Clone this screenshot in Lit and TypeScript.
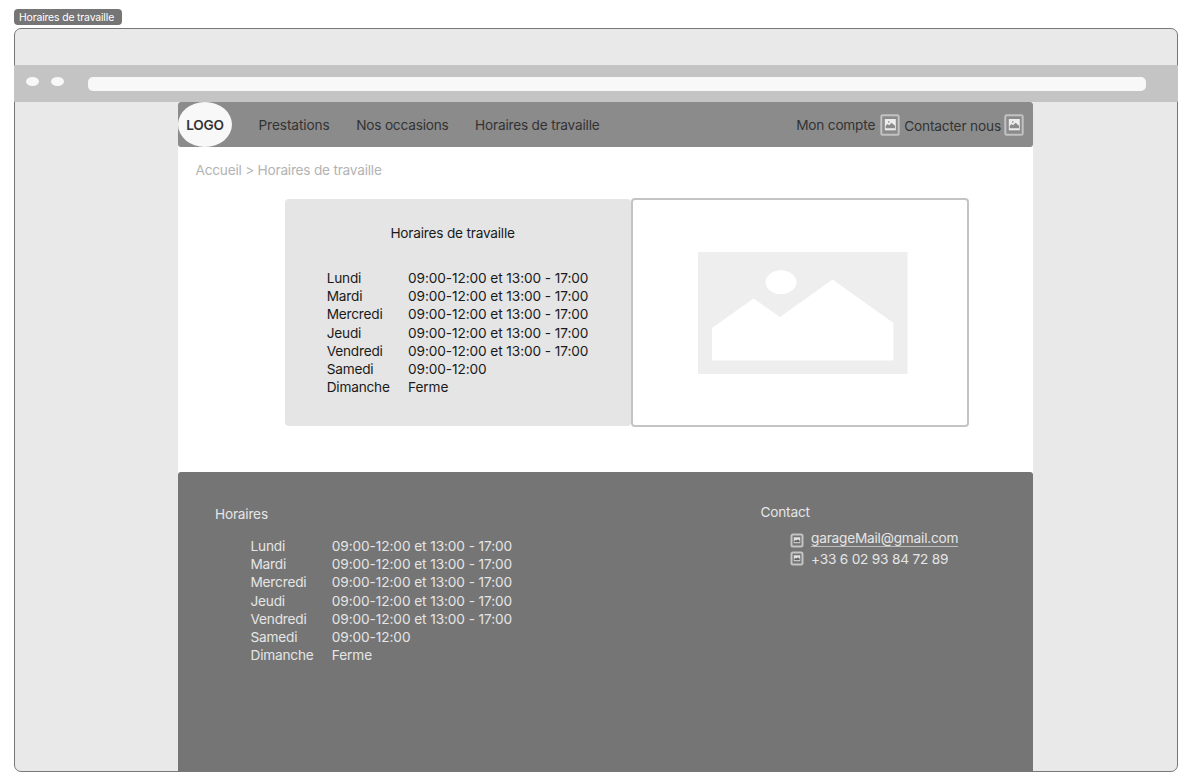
import { LitElement, html, css, svg } from "lit";
import { customElement, property } from "lit/decorators.js";

const HOURS: [string, string][] = [
  ["Lundi", "09:00-12:00 et 13:00 - 17:00"],
  ["Mardi", "09:00-12:00 et 13:00 - 17:00"],
  ["Mercredi", "09:00-12:00 et 13:00 - 17:00"],
  ["Jeudi", "09:00-12:00 et 13:00 - 17:00"],
  ["Vendredi", "09:00-12:00 et 13:00 - 17:00"],
  ["Samedi", "09:00-12:00"],
  ["Dimanche", "Ferme"],
];

// Landscape placeholder: a frame with two peaks and a sun cut out of it.
const landscape = svg`<path fill-rule="evenodd" d="M0 0H209.500V122H0ZM14 76V108.500H195.500V71L134.500 27.500L82 65L55.500 46.500ZM83 18A17 12.200 0 0 0 83 42.300A17 12.200 0 0 0 83 18Z"/>`;

@customElement("hours-table")
class HoursTable extends LitElement {
  static styles = css`
    :host { display: block; }
    .grid {
      display: grid;
      grid-template-columns: 81.300px max-content;
      grid-auto-rows: 18.200px;
      line-height: 18.200px;
      white-space: nowrap;
    }
    .time { letter-spacing: -.08px; }
  `;
  render() {
    return html`<div class="grid">
      ${HOURS.map(([day, time]) => html`<span>${day}</span><span class="time">${time}</span>`)}
    </div>`;
  }
}

@customElement("picture-icon")
class PictureIcon extends LitElement {
  @property({ type: Boolean, reflect: true }) small = false;
  static styles = css`
    :host { display: block; flex: none; width: 20px; height: 22px; }
    :host([small]) { width: 14px; height: 15px; }
    svg { display: block; width: 100%; height: 100%; }
  `;
  render() {
    return this.small
      ? html`<svg viewBox="0 0 14 15">
          <rect x="1.500" y="1.500" width="11" height="12" rx="1.500" fill="#757575" stroke="#c4c4c4" stroke-width="2"/>
          <path d="M3.800 4.300H10.200V10.200H3.800Z" fill="#e4e4e4"/>
          <path d="M4.300 9.300V8L5.600 6.700L6.600 7.600L8 6.200L9.700 7.800V9.300Z" fill="#666"/>
        </svg>`
      : html`<svg viewBox="0 0 20 22">
          <rect x="1.300" y="1.300" width="17.400" height="19.400" rx="1.500" fill="#8b8b8b" stroke="#c2c2c2" stroke-width="2"/>
          <path d="M4.800 5H15.800V16.300H4.800Z" fill="#ededed"/>
          <path d="M5.700 14.300V11.700L7.600 10L9.200 11.300L11.500 8.700L15 11.700V14.300Z" fill="#8b8b8b"/>
          <circle cx="8.800" cy="7.900" r=".8" fill="#8b8b8b"/>
        </svg>`;
  }
}

@customElement("app-root")
class AppRoot extends LitElement {
  static styles = css`
    :host {
      display: block;
      box-sizing: border-box;
      height: 780px;
      padding: 9px 25px 0 14px;
      overflow: hidden;
      background: #fff;
      font: 13.650px/18px Inter, sans-serif;
      letter-spacing: -.2px;
      white-space: nowrap;
    }
    .tag {
      width: 107.500px;
      height: 16px;
      box-sizing: border-box;
      padding-left: 5px;
      border-radius: 4px;
      background: #757575;
      color: #fff;
      font-size: 10.400px;
      letter-spacing: -.14px;
      line-height: 17px;
    }
    .frame {
      display: flex;
      flex-direction: column;
      box-sizing: border-box;
      height: 744px;
      margin-top: 3px;
      border: 1px solid #777;
      border-radius: 7px;
      background: #e9e9e9;
    }
    .bar {
      display: flex;
      flex: none;
      box-sizing: border-box;
      height: 37px;
      margin: 36px -1px 0;
      padding: 12px 32px 0 12px;
      background: #c4c4c4;
      border-radius: 1px;
    }
    .dot {
      width: 13px;
      height: 9px;
      margin-right: 12px;
      border-radius: 50%;
      background: #f8f8f8;
    }
    .address {
      flex: 1;
      height: 14px;
      margin-left: 12px;
      border-radius: 5px;
      background: #f8f8f8;
    }
    .page {
      display: flex;
      flex-direction: column;
      flex: 1;
      width: 855px;
      margin-left: 163px;
      background: #fff;
    }
    nav {
      display: flex;
      align-items: center;
      box-sizing: border-box;
      height: 45px;
      padding-right: 9px;
      border-radius: 3px;
      background: #8b8b8b;
      color: #333;
    }
    .logo {
      width: 54px;
      height: 45px;
      margin-right: 26.500px;
      border-radius: 50%;
      background: #f8f8f8;
      line-height: 46px;
      text-align: center;
      font-weight: 600;
    }
    .link { margin-right: 26.500px; padding-top: 1px; }
    .services { letter-spacing: -.09px; }
    .account { margin: 1px 5px 0 auto; }
    .contact-link { margin: 2px 3px 0 4px; letter-spacing: -.15px; }
    .lowered { margin-top: 1px; }
    .crumbs {
      height: 52px;
      box-sizing: border-box;
      padding: 14px 0 0 17.500px;
      color: #b3b3b3;
      letter-spacing: -.22px;
    }
    .cards { display: flex; height: 228px; margin-left: 107px; }
    .card {
      width: 346px;
      height: 227px;
      box-sizing: border-box;
      padding: 25px 0 0 41.700px;
      border-radius: 4px;
      background: #e5e5e5;
      color: #1a1a1a;
    }
    .title { margin: 0 0 27px 63.700px; }
    .photo {
      display: flex;
      justify-content: center;
      box-sizing: border-box;
      width: 338px;
      height: 229px;
      margin-top: -1px;
      padding-top: 52px;
      border: 2px solid #c4c4c4;
      border-radius: 4px;
    }
    .photo svg { width: 210px; height: 122px; fill: #eee; margin-left: 5px; }
    footer {
      display: flex;
      flex: 1;
      margin-top: 45px;
      border-radius: 3px 3px 0 0;
      background: #757575;
      color: #e5e5e5;
    }
    .hours { width: 545.500px; padding: 33px 0 0 37px; }
    .hours hours-table { margin: 14px 0 0 35.500px; }
    .contact { padding: 31px 0 0; }
    .row { display: flex; align-items: center; height: 18px; margin-left: 29px; }
    .mail { margin-top: 10px; }
    .row picture-icon { margin-right: 7.500px; }
    .address-link {
      height: 16px;
      line-height: 16px;
      margin-bottom: 3px;
      border-bottom: 1px solid #bcbcbc;
    }
    .phone { margin-top: 1px; }
    .phone picture-icon { margin-bottom: 1px; }
  `;

  render() {
    return html`
      <div class="tag">Horaires de travaille</div>
      <div class="frame">
        <div class="bar">
          <span class="dot"></span><span class="dot"></span><span class="address"></span>
        </div>
        <div class="page">
          <nav>
            <span class="logo">LOGO</span>
            <span class="link services">Prestations</span>
            <span class="link">Nos occasions</span>
            <span class="link">Horaires de travaille</span>
            <span class="account">Mon compte</span>
            <picture-icon></picture-icon>
            <span class="contact-link">Contacter nous</span>
            <picture-icon class="lowered"></picture-icon>
          </nav>
          <div class="crumbs">Accueil &gt; Horaires de travaille</div>
          <div class="cards">
            <section class="card">
              <div class="title">Horaires de travaille</div>
              <hours-table></hours-table>
            </section>
            <div class="photo"><svg viewBox="0 0 210 122">${landscape}</svg></div>
          </div>
          <footer>
            <section class="hours">
              <div>Horaires</div>
              <hours-table></hours-table>
            </section>
            <section class="contact">
              <div>Contact</div>
              <div class="row mail">
                <picture-icon small></picture-icon>
                <span class="address-link">garageMail@gmail.com</span>
              </div>
              <div class="row phone">
                <picture-icon small></picture-icon>
                <span>+33 6 02 93 84 72 89</span>
              </div>
            </section>
          </footer>
        </div>
      </div>
    `;
  }
}
